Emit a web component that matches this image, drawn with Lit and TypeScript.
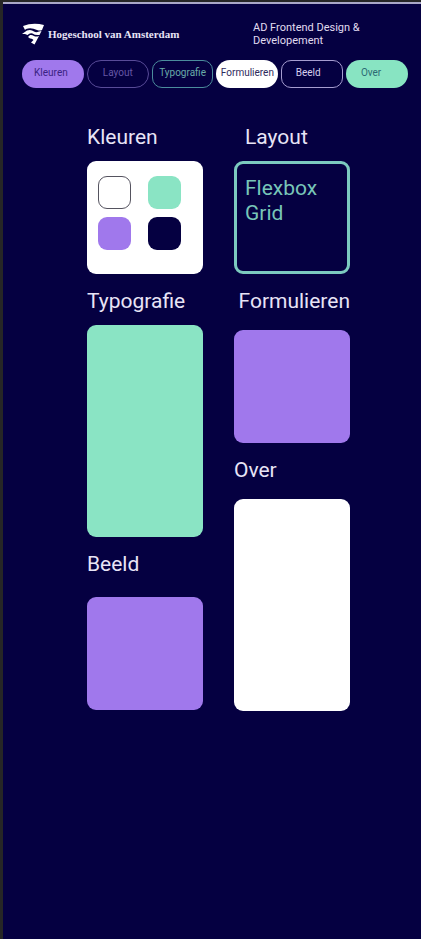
import { LitElement, html, css } from "lit";
import { customElement } from "lit/decorators.js";

@customElement("site-header")
class SiteHeader extends LitElement {
  static styles = css`
    :host {
      display: block;
      padding: 17px 13px 0 19px;
    }
    .top {
      display: grid;
      grid-template-columns: 231fr 155fr;
      align-items: center;
    }
    .brand {
      display: flex;
      align-items: center;
      gap: 4px;
      color: #e8e4f6;
      text-decoration: none;
      font: bold 11px/22px "Liberation Serif", serif;
      white-space: nowrap;
    }
    .logo {
      width: 22px;
      height: 22px;
      flex: none;
    }
    .programme {
      margin: 0;
      padding-right: 40px;
      font-size: 11px;
      line-height: 13px;
      color: #e0dcf0;
    }
    nav {
      display: grid;
      grid-template-columns: repeat(6, minmax(0, 1fr));
      gap: 3px;
      margin-top: 13px;
    }
    .pill {
      box-sizing: border-box;
      height: 28px;
      border: 1px solid transparent;
      border-radius: 14px;
      display: flex;
      align-items: center;
      justify-content: center;
      padding-bottom: 2px;
      font-size: 10px;
      line-height: 12px;
      text-decoration: none;
    }
    .kleuren {
      background: #a078ec;
      color: #3a2382;
      padding-right: 4px;
    }
    .layout {
      border-color: #584b98;
      color: #6656a6;
    }
    .typografie {
      border-color: #4b8c9c;
      border-radius: 10px;
      color: #68aaa8;
    }
    .formulieren {
      background: #fff;
      color: #2e2a5c;
    }
    .beeld {
      border-color: #a69dd0;
      border-radius: 10px;
      color: #d8d0ee;
      padding-right: 8px;
    }
    .over {
      background: #88e4c2;
      color: #2c6a74;
      padding-right: 12px;
    }
  `;

  private links = ["Kleuren", "Layout", "Typografie", "Formulieren", "Beeld", "Over"];

  render() {
    return html`
      <div class="top">
        <a class="brand" href="#">
          <svg class="logo" viewBox="0 0 22 22" fill="#fff" aria-hidden="true">
            <path d="M1 3 Q11 -1 22 2 L20 7 Q18 8 15 7 Q9 4 4 6 L3 7 Z" />
            <path d="M0 11 L5 7.500 Q9 6 12 8.500 Q14 10 17 8.500 L19.500 8 L17.500 12 Q13 12.500 10.500 10.500 Q8 9.500 5.500 12 L3 11 Z" />
            <path d="M6 14 L8 12 Q10 11.500 12 13 Q14 14 17 13 L12.500 21.500 L9 19.500 L11.500 17 Q10 15 8 15.500 Z" />
          </svg>
          <span>Hogeschool van Amsterdam</span>
        </a>
        <p class="programme">AD Frontend Design &amp; Developement</p>
      </div>
      <nav>
        ${this.links.map(
          (name) => html`<a class="pill ${name.toLowerCase()}" href="#${name.toLowerCase()}">${name}</a>`
        )}
      </nav>
    `;
  }
}

@customElement("app-root")
class AppRoot extends LitElement {
  static styles = css`
    :host {
      display: block;
      box-sizing: border-box;
      min-height: 100vh;
      border-left: 3px solid #262626;
      background: #050041;
      color: #e8e4f6;
      font-family: Roboto, sans-serif;
    }
    .edge {
      height: 2px;
      background: #262626;
      border-bottom: 2px solid #aaa8c8;
    }
    main {
      display: grid;
      grid-template-columns: repeat(2, minmax(0, 1fr));
      gap: 31px;
      padding: 37px 71px 40px 84px;
    }
    .column {
      display: flex;
      flex-direction: column;
      gap: 15px;
    }
    section {
      display: flex;
      flex-direction: column;
      gap: 11px;
    }
    .roomy {
      gap: 16px;
    }
    .loose {
      gap: 20px;
    }
    h2 {
      margin: 0;
      font-size: 21px;
      line-height: 25px;
      font-weight: 400;
    }
    .inset {
      padding-left: 11px;
    }
    .end {
      text-align: right;
    }
    .card {
      box-sizing: border-box;
      height: 113px;
      border-radius: 9px;
    }
    .tall {
      height: 212px;
    }
    .white {
      background: #fff;
    }
    .mint {
      background: #8ae4c4;
    }
    .purple {
      background: #a078ec;
    }
    .navy {
      background: #050041;
    }
    .swatches {
      display: grid;
      grid-template-columns: 33px 33px;
      grid-auto-rows: 33px;
      gap: 8px 17px;
      padding: 15px 11px;
    }
    .swatch {
      box-sizing: border-box;
      border-radius: 9px;
    }
    .outlined {
      border: 1px solid #55535f;
    }
    .topics {
      margin: 0;
      padding: 12px 8px;
      list-style: none;
      border: 3px solid #7ccabf;
      color: #78c6b8;
      font-size: 21px;
      line-height: 25px;
    }
  `;

  render() {
    return html`
      <div class="edge"></div>
      <site-header></site-header>
      <main>
        <div class="column">
          <section id="kleuren">
            <h2>Kleuren</h2>
            <div class="card white swatches">
              <div class="swatch outlined"></div>
              <div class="swatch mint"></div>
              <div class="swatch purple"></div>
              <div class="swatch navy"></div>
            </div>
          </section>
          <section id="typografie">
            <h2>Typografie</h2>
            <div class="card tall mint"></div>
          </section>
          <section id="beeld" class="loose">
            <h2>Beeld</h2>
            <div class="card purple"></div>
          </section>
        </div>
        <div class="column">
          <section id="layout">
            <h2 class="inset">Layout</h2>
            <ul class="card topics">
              <li>Flexbox</li>
              <li>Grid</li>
            </ul>
          </section>
          <section id="formulieren" class="roomy">
            <h2 class="end">Formulieren</h2>
            <div class="card purple"></div>
          </section>
          <section id="over" class="roomy">
            <h2>Over</h2>
            <div class="card tall white"></div>
          </section>
        </div>
      </main>
    `;
  }
}
